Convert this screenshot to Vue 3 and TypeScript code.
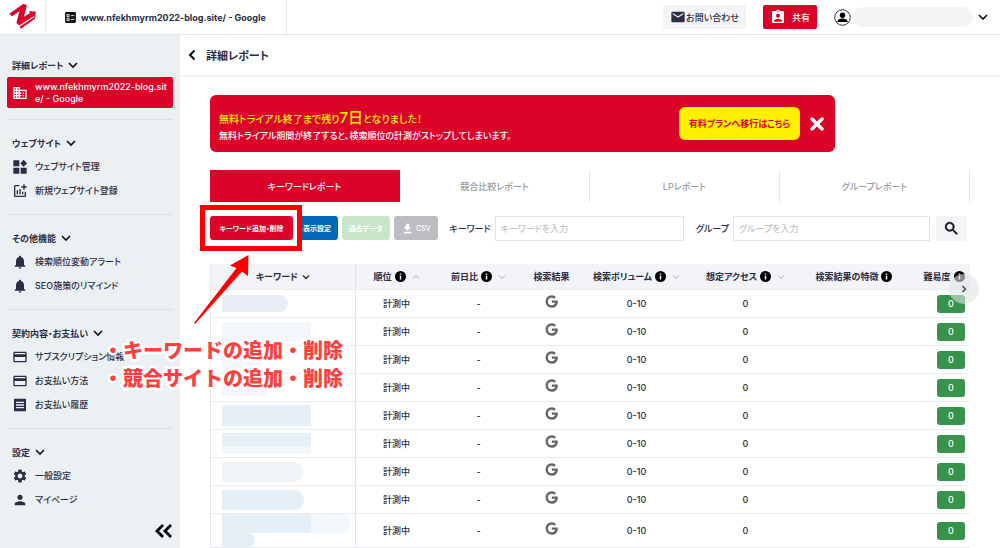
<script setup lang="ts">
import { ref } from 'vue'

interface NavItem { label: string; icon: string; active?: boolean }
interface NavSection { title: string; items: NavItem[] }
interface Column { label: string; info?: boolean; sort?: 'up' | 'down' | 'menu'; width: number }
interface Mask { w: number; h: number; tone: string; round?: boolean }

const icons: Record<string, string> = {
  business: 'M12 7V3H2v18h20V7H12zM6 19H4v-2h2v2zm0-4H4v-2h2v2zm0-4H4V9h2v2zm0-4H4V5h2v2zm4 12H8v-2h2v2zm0-4H8v-2h2v2zm0-4H8V9h2v2zm0-4H8V5h2v2zm10 12h-8v-2h2v-2h-2v-2h2v-2h-2V9h8v10zm-2-8h-2v2h2v-2zm0 4h-2v2h2v-2z',
  widgets: 'M2 2h9v9H2zM2 13h9v9H2zM13 13h9v9h-9zM17.500 1l5 5.500-5 5.500-5-5.500z',
  addchart: 'M22 5v2h-3v3h-2V7h-3V5h3V2h2v3h3zm-3 14H5V5h6V3H5c-1.100 0-2 .9-2 2v14c0 1.100.9 2 2 2h14c1.100 0 2-.9 2-2v-6h-2v6zm-4-6v4h2v-4h-2zm-4 4h2V9h-2v8zm-2 0v-6H7v6h2z',
  bell: 'M12 22c1.1 0 2-.9 2-2h-4c0 1.1.89 2 2 2zm6-6v-5c0-3.07-1.64-5.64-4.5-6.32V4c0-.83-.67-1.5-1.5-1.5s-1.5.67-1.5 1.5v.68C7.63 5.36 6 7.92 6 11v5l-2 2v1h16v-1l-2-2z',
  card: 'M20 4H4c-1.11 0-1.99.89-1.99 2L2 18c0 1.11.89 2 2 2h16c1.11 0 2-.89 2-2V6c0-1.11-.89-2-2-2zm0 14H4v-6h16v6zm0-10H4V6h16v2z',
  receipt: 'M18 17H6v-2h12v2zm0-4H6v-2h12v2zm0-4H6V7h12v2zM3 22l1.5-1.5L6 22l1.5-1.5L9 22l1.5-1.5L12 22l1.5-1.500L15 22l1.500-1.500L18 22l1.500-1.500L21 22V2l-1.500 1.500L18 2l-1.500 1.500L15 2l-1.500 1.500L12 2l-1.500 1.500L9 2 7.500 3.500 6 2 4.500 3.500 3 2v20z',
  settings: 'M19.14 12.94c.04-.3.06-.61.06-.94 0-.32-.02-.64-.07-.94l2.03-1.58c.18-.14.23-.41.12-.61l-1.92-3.32c-.12-.22-.37-.29-.59-.22l-2.39.96c-.5-.38-1.03-.7-1.62-.94l-.36-2.54c-.04-.24-.24-.41-.48-.41h-3.84c-.24 0-.43.17-.47.41l-.36 2.54c-.59.24-1.13.57-1.62.94l-2.39-.96c-.22-.08-.47 0-.59.22L2.74 8.87c-.12.21-.08.47.12.61l2.03 1.58c-.05.3-.09.63-.09.94s.02.64.07.94l-2.03 1.58c-.18.14-.23.41-.12.61l1.92 3.32c.12.22.37.29.59.22l2.39-.96c.5.38 1.03.7 1.62.94l.36 2.54c.05.24.24.41.48.41h3.84c.24 0 .44-.17.47-.41l.36-2.54c.59-.24 1.13-.56 1.62-.94l2.39.96c.22.08.47 0 .59-.22l1.92-3.32c.12-.22.07-.47-.12-.61l-2.010-1.580zM12 15.600c-1.980 0-3.600-1.620-3.600-3.600s1.620-3.600 3.600-3.600 3.600 1.620 3.600 3.600-1.620 3.600-3.600 3.600z',
  person: 'M12 12c2.21 0 4-1.79 4-4s-1.79-4-4-4-4 1.79-4 4 1.79 4 4 4zm0 2c-2.67 0-8 1.34-8 4v2h16v-2c0-2.66-5.33-4-8-4z',
}

const sections: NavSection[] = [
  { title: '詳細レポート', items: [{ label: 'www.nfekhmyrm2022-blog.site/ - Google', icon: 'business', active: true }] },
  { title: 'ウェブサイト', items: [{ label: 'ウェブサイト管理', icon: 'widgets' }, { label: '新規ウェブサイト登録', icon: 'addchart' }] },
  { title: 'その他機能', items: [{ label: '検索順位変動アラート', icon: 'bell' }, { label: 'SEO施策のリマインド', icon: 'bell' }] },
  {
    title: '契約内容・お支払い',
    items: [
      { label: 'サブスクリプション情報', icon: 'card' },
      { label: 'お支払い方法', icon: 'card' },
      { label: 'お支払い履歴', icon: 'receipt' },
    ],
  },
  { title: '設定', items: [{ label: '一般設定', icon: 'settings' }, { label: 'マイページ', icon: 'person' }] },
]

const tabs = ['キーワードレポート', '競合比較レポート', 'LPレポート', 'グループレポート']
const activeTab = ref(tabs[0])
const keyword = ref('')
const group = ref('')
const bannerOpen = ref(true)

const columns: Column[] = [
  { label: 'キーワード', sort: 'menu', width: 145 },
  { label: '順位', info: true, sort: 'up', width: 81 },
  { label: '前日比', info: true, sort: 'down', width: 83 },
  { label: '検索結果', width: 63 },
  { label: '検索ボリューム', info: true, sort: 'down', width: 107 },
  { label: '想定アクセス', info: true, sort: 'down', width: 111 },
  { label: '検索結果の特徴', info: true, width: 106 },
  { label: '難易度', info: true, sort: 'down', width: 88 },
]
const tableWidth = columns.reduce((sum, c) => sum + c.width, 0)

// Keyword names are hidden behind soft tinted bars.
const rows: Mask[][] = [
  [{ w: 66, h: 17, tone: 'mid', round: true }],
  [{ w: 89, h: 20, tone: 'faint' }],
  [{ w: 40, h: 16, tone: 'faint' }],
  [{ w: 45, h: 16, tone: 'faint' }],
  [{ w: 89, h: 21, tone: 'blue' }],
  [{ w: 89, h: 13, tone: 'blue' }, { w: 89, h: 8, tone: 'faint' }],
  [{ w: 81, h: 20, tone: 'soft', round: true }],
  [{ w: 82, h: 20, tone: 'blue', round: true }],
  [{ w: 128, h: 19, tone: 'fade', round: true }, { w: 33, h: 14, tone: 'blue', round: true }],
]
</script>

<template>
  <div class="page">
    <header class="top">
      <a class="logo" href="#" aria-label="ホーム">
        <svg viewBox="0 0 80 82" width="27" height="28">
          <path d="M1 31 43 2l10 4-9 34 18-10-3-6 20 1-1 20-5-6-43 27-8-7 9-35-22 15z" fill="#dc0329" />
          <path d="M31 70 76 41l1 5-42 30z" fill="#dc0329" />
        </svg>
      </a>
      <div class="site">
        <svg viewBox="0 0 24 24" width="13" height="13">
          <path fill="#111" d="M4 2h16a2 2 0 0 1 2 2v16a2 2 0 0 1-2 2H4a2 2 0 0 1-2-2V4a2 2 0 0 1 2-2z" />
          <path fill="none" stroke="#fff" stroke-width="1.6" d="M5.500 6.500h4v4h-4zM5.500 13.500h4v4h-4zM13 8.500h6M13 15.500h6" />
        </svg>
        <span>www.nfekhmyrm2022-blog.site/ - Google</span>
      </div>
      <div class="actions">
        <button class="contact" type="button">
          <svg viewBox="0 0 24 24" width="16" height="16"><path d="M20 4H4c-1.1 0-1.99.9-1.99 2L2 18c0 1.1.9 2 2 2h16c1.1 0 2-.9 2-2V6c0-1.1-.9-2-2-2zm0 4l-8 5-8-5V6l8 5 8-5v2z" /></svg>
          お問い合わせ
        </button>
        <button class="share" type="button">
          <svg viewBox="0 0 24 24" width="16" height="16"><path d="M19 3h-4.18C14.4 1.84 13.3 1 12 1c-1.3 0-2.4.84-2.82 2H5c-1.1 0-2 .9-2 2v14c0 1.1.9 2 2 2h14c1.1 0 2-.9 2-2V5c0-1.1-.9-2-2-2zm-7 0c.55 0 1 .45 1 1s-.45 1-1 1-1-.45-1-1 .45-1 1-1zm0 4c1.66 0 3 1.34 3 3s-1.34 3-3 3-3-1.34-3-3 1.34-3 3-3zm6 12H6v-1.4c0-2 4-3.1 6-3.1s6 1.1 6 3.1V19z" /></svg>
          共有
        </button>
        <button class="account" type="button" aria-label="アカウント">
          <svg viewBox="0 0 24 24" width="17" height="17">
            <circle cx="12" cy="12" r="11" fill="#fff" stroke="#2b2d47" stroke-width="1.400" />
            <circle cx="12" cy="8.800" r="3.800" fill="#000" />
            <path d="M4.500 18.500c0-3.500 4.500-5 7.500-5s7.500 1.500 7.500 5z" fill="#000" />
          </svg>
          <span class="name-mask"></span>
          <svg class="chev" viewBox="0 0 10 10" width="10" height="10"><path d="M1 3l4 4 4-4" /></svg>
        </button>
      </div>
    </header>

    <div class="body">
      <nav class="side">
        <section v-for="s in sections" :key="s.title" class="group">
          <button class="group-title" type="button">
            {{ s.title }}
            <svg class="chev" viewBox="0 0 10 10" width="10" height="10"><path d="M1 3l4 4 4-4" /></svg>
          </button>
          <a v-for="i in s.items" :key="i.label" href="#" class="item" :class="{ active: i.active }">
            <svg viewBox="0 0 24 24" width="16" height="16"><path :d="icons[i.icon]" /></svg>
            <span>{{ i.label }}</span>
          </a>
        </section>
        <button class="collapse" type="button" aria-label="メニューを閉じる">
          <svg viewBox="0 0 18 16" width="18" height="16"><path d="M8 2 2 8l6 6M16 2l-6 6 6 6" fill="none" stroke="#000" stroke-width="2.800" /></svg>
        </button>
      </nav>

      <main class="main">
        <div class="title-bar">
          <button type="button" class="back" aria-label="戻る">
            <svg viewBox="0 0 8 12" width="8" height="12"><path d="M6.500 1.500 2 6l4.500 4.500" fill="none" stroke="#000" stroke-width="2" /></svg>
          </button>
          <h1>詳細レポート</h1>
        </div>

        <div class="content">
          <div v-if="bannerOpen" class="banner">
            <div class="banner-text">
              <p class="lead">無料トライアル終了まで残り<span class="days">7日</span>となりました！</p>
              <p class="note">無料トライアル期間が終了すると、検索順位の計測がストップしてしまいます。</p>
            </div>
            <a href="#" class="upgrade">有料プランへ移行はこちら</a>
            <button type="button" class="close" aria-label="閉じる" @click="bannerOpen = false">
              <svg viewBox="0 0 14 14" width="14" height="14"><path d="M2 2l10 10M12 2 2 12" stroke="#fff" stroke-width="3.400" stroke-linecap="round" /></svg>
            </button>
          </div>

          <div class="tabs" role="tablist">
            <button
              v-for="t in tabs"
              :key="t"
              type="button"
              role="tab"
              class="tab"
              :class="{ on: t === activeTab }"
              :aria-selected="t === activeTab"
              @click="activeTab = t"
            >{{ t }}</button>
          </div>

          <form class="filters" @submit.prevent>
            <div class="add-wrap">
              <button type="button" class="btn red">キーワード追加・削除</button>
              <span class="frame"></span>
              <svg class="arrow" viewBox="0 0 60 72" width="60" height="72"><path d="M1 69 43.500 14 37 11.500 55.500 1 55 22 49 17.500 2 70z" /></svg>
              <div class="callout">
                <p>・キーワードの追加・削除</p>
                <p>・競合サイトの追加・削除</p>
              </div>
            </div>
            <button type="button" class="btn blue">表示設定</button>
            <button type="button" class="btn green">過去データ</button>
            <button type="button" class="btn grey">
              <svg viewBox="0 0 24 24" width="13" height="13"><path d="M19 9h-4V3H9v6H5l7 7 7-7zM5 18v3h14v-3H5z" fill="#fff" /></svg>
              CSV
            </button>
            <label for="kw">キーワード</label>
            <input id="kw" v-model="keyword" type="text" placeholder="キーワードを入力" />
            <label for="grp">グループ</label>
            <input id="grp" v-model="group" type="text" placeholder="グループを入力" />
            <button type="submit" class="search" aria-label="検索">
              <svg viewBox="0 0 24 24" width="17" height="17"><path d="M15.5 14h-.79l-.28-.27C15.41 12.59 16 11.11 16 9.5 16 5.91 13.09 3 9.5 3S3 5.91 3 9.5 5.91 16 9.5 16c1.61 0 3.09-.59 4.23-1.57l.27.28v.79l5 4.99L20.49 19l-4.99-5zm-6 0C7.01 14 5 11.99 5 9.5S7.01 5 9.5 5 14 7.01 14 9.5 11.99 14 9.5 14z" fill="#111" stroke="#111" stroke-width="0.8" /></svg>
            </button>
          </form>

          <div class="table-box">
            <div class="table-clip">
              <table>
                <colgroup>
                  <col v-for="c in columns" :key="c.label" :style="{ width: (c.width / tableWidth) * 100 + '%' }" />
                </colgroup>
                <thead>
                  <tr>
                    <th v-for="c in columns" :key="c.label" scope="col">
                      <span class="th">
                        {{ c.label }}
                        <svg v-if="c.info" class="info" viewBox="0 0 12 12" width="11" height="11">
                          <circle cx="6" cy="6" r="6" fill="#000" />
                          <path d="M5.200 5.200h1.600v4H5.200zM5.200 2.700h1.600v1.500H5.200z" fill="#fff" />
                        </svg>
                        <svg v-if="c.sort" class="sort" :class="c.sort" viewBox="0 0 8 8" width="8" height="8">
                          <path :d="c.sort === 'up' ? 'M1 5.500l3-3 3 3' : 'M1 2.500l3 3 3-3'" />
                        </svg>
                      </span>
                    </th>
                  </tr>
                </thead>
                <tbody>
                  <tr v-for="(masks, n) in rows" :key="n">
                    <td class="kw">
                      <span
                        v-for="(m, k) in masks"
                        :key="k"
                        class="mask"
                        :class="[m.tone, { round: m.round }]"
                        :style="{ width: m.w + 'px', height: m.h + 'px' }"
                      ></span>
                    </td>
                    <td>計測中</td>
                    <td>-</td>
                    <td>
                      <svg class="g" viewBox="0 0 24 24" width="15" height="15"><path d="M12.545 10.239v3.821h5.445c-.712 2.315-2.647 3.972-5.445 3.972a6.033 6.033 0 110-12.064c1.498 0 2.866.549 3.921 1.453l2.814-2.814A9.969 9.969 0 0012.545 2C7.021 2 2.543 6.477 2.543 12s4.478 10 10.002 10c8.396 0 10.249-7.85 9.426-11.748l-9.426-.013z" fill="#666" /></svg>
                    </td>
                    <td>0-10</td>
                    <td>0</td>
                    <td></td>
                    <td><span class="badge">0</span></td>
                  </tr>
                </tbody>
              </table>
            </div>
            <button type="button" class="next" aria-label="次へ">
              <svg viewBox="0 0 8 8" width="8" height="8"><path d="M2.500 1l3 3-3 3" fill="none" stroke="#333" stroke-width="1.200" /></svg>
            </button>
          </div>
        </div>
      </main>
    </div>
  </div>
</template>

<style>
html,
body {
  margin: 0;
  background: #fff;
}
</style>

<style scoped>
* {
  box-sizing: border-box;
}
.page {
  height: 100vh;
  display: flex;
  flex-direction: column;
  overflow: hidden;
  font-family: Inter, "Noto Sans CJK JP", sans-serif;
  font-feature-settings: "palt";
  font-size: 9px;
  font-weight: 500;
  color: #2b2d47;
}
button,
input {
  font: inherit;
  font-feature-settings: inherit;
  color: inherit;
  border: 0;
  margin: 0;
  padding: 0;
  background: none;
}
button {
  cursor: pointer;
}
a {
  color: inherit;
  text-decoration: none;
}
p,
h1 {
  margin: 0;
}
svg {
  display: block;
  flex: none;
}
.chev {
  fill: none;
  stroke: #111;
  stroke-width: 1.6;
}
.top {
  flex: none;
  height: 35px;
  display: flex;
  border-bottom: 1px solid #e6e6ea;
}
.logo {
  width: 46px;
  display: flex;
  align-items: center;
  justify-content: center;
  border-right: 1px solid #e9e9ed;
}
.site {
  display: flex;
  align-items: center;
  gap: 4px;
  padding: 0 20px 0 18px;
  font-weight: 700;
  border-right: 1px solid #e9e9ed;
}
.actions {
  flex: 1;
  display: flex;
  align-items: center;
  justify-content: flex-end;
  padding-right: 12px;
}
.contact,
.share {
  height: 24px;
  display: flex;
  align-items: center;
  justify-content: center;
  border-radius: 2px;
}
.contact {
  width: 83px;
  background: #f3f4f8;
  margin-right: 17px;
}
.contact svg {
  fill: #2b2d47;
}
.share {
  width: 54px;
  gap: 6px;
  background: #dc0329;
  color: #fff;
  margin-right: 17px;
}
.share svg {
  fill: #fff;
}
.account {
  display: flex;
  align-items: center;
}
.name-mask {
  width: 120px;
  height: 20px;
  margin: 0 5px 0 2px;
  border-radius: 10px;
  background: #f4f4f5;
}
.body {
  flex: 1;
  min-height: 0;
  display: flex;
}
.side {
  flex: none;
  width: 180px;
  padding: 7px 7px 9px;
  background: #ebf0f3;
  display: flex;
  flex-direction: column;
}
.group {
  padding: 11px 0;
  border-bottom: 1px solid #dddfe3;
}
.group:nth-last-of-type(1) {
  border-bottom: 0;
}
.group-title {
  height: 24px;
  padding-left: 5px;
  display: flex;
  align-items: center;
  gap: 5px;
  font-weight: 700;
}
.item {
  height: 24px;
  padding-left: 5px;
  display: flex;
  align-items: center;
  gap: 7px;
  line-height: 12px;
  white-space: nowrap;
}
.item svg {
  fill: #2b2d47;
}
.item.active {
  height: 31px;
  padding-right: 4px;
  background: #dc0329;
  color: #fff;
  border-radius: 2px;
  white-space: normal;
  word-break: break-all;
}
.item.active svg {
  fill: #fff;
}
.collapse {
  margin-top: auto;
  align-self: flex-end;
}
.main {
  flex: 1;
  min-width: 0;
}
.title-bar {
  height: 42px;
  padding-left: 8px;
  display: flex;
  align-items: center;
  gap: 10px;
  border-bottom: 2px solid #f2f2f4;
}
h1 {
  font-size: 11px;
  font-weight: 700;
}
.content {
  padding: 18px 30px 0;
}
.banner {
  max-width: 625px;
  height: 57px;
  padding: 0 11px 0 9px;
  margin-bottom: 18px;
  display: flex;
  align-items: center;
  border-radius: 6px;
  background: #dc0329;
  color: #fff;
}
.banner-text {
  flex: 1;
  padding-top: 4px;
}
.lead {
  font-size: 10px;
  line-height: 20px;
  color: #fff000;
}
.days {
  font-size: 15px;
}
.note {
  line-height: 14px;
}
.upgrade {
  width: 121px;
  height: 33px;
  margin-right: 10px;
  display: flex;
  align-items: center;
  justify-content: center;
  border-radius: 6px;
  background: #fff000;
  color: #dc0329;
  font-weight: 700;
}
.tabs {
  display: grid;
  grid-template-columns: repeat(4, 1fr);
  height: 32px;
}
.tab {
  color: #9a9ba3;
  border-right: 1px solid #e6e6ea;
}
.tab.on {
  background: #dc0329;
  border-color: #dc0329;
  color: #fff;
}
.filters {
  display: flex;
  align-items: center;
  height: 24px;
  margin: 14px 3px 24px 0;
}
.add-wrap {
  position: relative;
  z-index: 2;
  margin-right: 3px;
}
.btn {
  height: 24px;
  display: flex;
  align-items: center;
  justify-content: center;
  gap: 2px;
  border-radius: 3px;
  color: #fff;
  font-size: 7px;
  font-weight: 700;
  white-space: nowrap;
}
.red {
  width: 83px;
  background: #dc0329;
}
.blue {
  width: 42px;
  margin-right: 4px;
  background: #0068b7;
}
.green {
  width: 48px;
  margin-right: 4px;
  background: #c8e6c9;
}
.grey {
  width: 45px;
  margin-right: 11px;
  background: #bdbdc1;
  font-weight: 500;
}
label {
  white-space: nowrap;
  margin-right: 4px;
}
input {
  flex: 1 1 190px;
  min-width: 0;
  height: 25px;
  padding: 0 5px;
  margin-right: 12px;
  border: 1px solid #e4e4e8;
}
input::placeholder {
  color: #c4c4ca;
  opacity: 1;
}
#grp {
  flex-basis: 198px;
  margin-right: 6px;
}
.search {
  width: 31px;
  height: 25px;
  display: flex;
  align-items: center;
  justify-content: center;
  background: #f3f4f8;
}
/* Annotation laid over the page, anchored to the add/remove button. */
.frame {
  position: absolute;
  left: -10px;
  top: -11px;
  width: 102px;
  height: 46px;
  border: 5px solid #ff0000;
  box-shadow: inset 0 0 0 2px #fff;
  pointer-events: none;
}
.arrow {
  position: absolute;
  left: -17px;
  top: 38px;
  fill: #ff0000;
}
.callout {
  position: absolute;
  left: -107px;
  top: 121px;
  font-size: 20px;
  line-height: 28px;
  font-weight: 900;
  font-feature-settings: normal;
  white-space: nowrap;
  color: #ff4040;
  -webkit-text-stroke: 5px #fff;
  paint-order: stroke fill;
}
.table-box {
  position: relative;
}
.table-clip {
  overflow: hidden;
  border-left: 1px solid #e6e7ec;
}
table {
  width: 100%;
  min-width: 784px;
  table-layout: fixed;
  border-collapse: separate;
  border-spacing: 0;
}
th,
td {
  padding: 0;
  text-align: center;
  border-bottom: 1px solid #ececf0;
}
th {
  height: 26px;
  background: #f2f4f8;
  font-weight: 700;
  white-space: nowrap;
}
th:first-child,
td:first-child {
  border-right: 1px solid #e3e4e9;
}
.th {
  display: flex;
  align-items: center;
  justify-content: center;
  gap: 3px;
}
.sort {
  margin-left: 3px;
  fill: none;
  stroke: #a9aab2;
  stroke-width: 1;
}
.sort.menu {
  margin-left: 1px;
  stroke: #2b2d47;
  stroke-width: 1.4;
}
td {
  height: 28px;
}
.kw {
  padding-left: 11px;
}
.mask {
  display: block;
}
.mask.round {
  border-radius: 0 10px 10px 0;
}
.mid {
  background: #e8edf4;
}
.faint {
  background: #f3f6fb;
}
.blue.mask {
  margin: 0;
  background: #e5eff8;
}
.soft {
  background: #eff4f9;
}
.fade {
  background: linear-gradient(90deg, #e5eff8 89px, #f2f7fc 89px);
}
.g {
  margin: 0 auto 5px;
}
.badge {
  display: block;
  width: 28px;
  height: 18px;
  margin: 0 auto;
  border-radius: 3px;
  line-height: 18px;
  background: #37924a;
  color: #fff;
}
.next {
  position: absolute;
  top: 10px;
  right: -9px;
  width: 30px;
  height: 30px;
  display: flex;
  align-items: center;
  justify-content: center;
  border-radius: 50%;
  background: rgba(225, 226, 230, 0.6);
}
</style>
